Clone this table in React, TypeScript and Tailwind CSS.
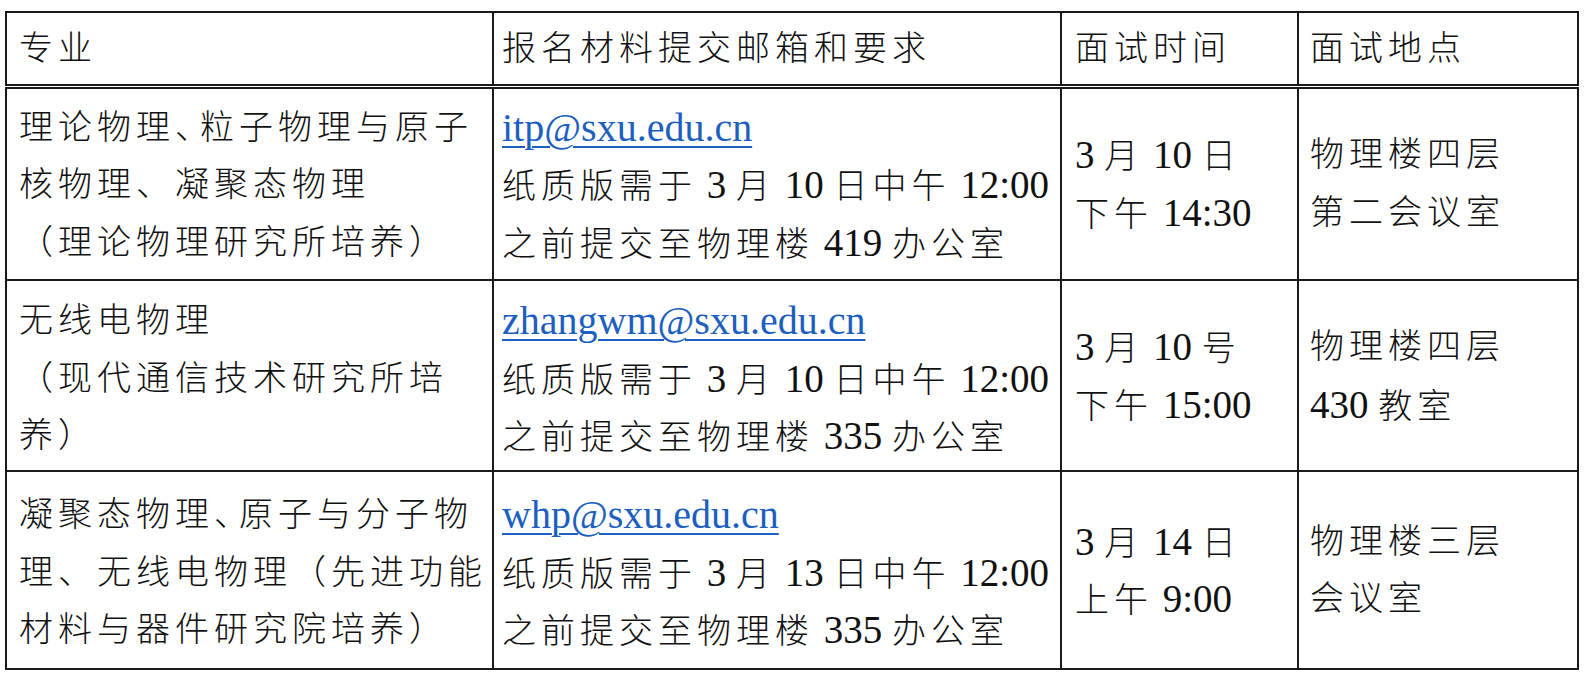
import React from "react";

const CJK = /[\u3000-\u303f\u4e00-\u9fff\uff00-\uffef]/;

function runs(s: string): { cjk: boolean; t: string }[] {
  const out: { cjk: boolean; t: string }[] = [];
  for (const ch of s) {
    const c = CJK.test(ch);
    const last = out[out.length - 1];
    if (last && last.cjk === c) last.t += ch;
    else out.push({ cjk: c, t: ch });
  }
  return out;
}

function Line({ text, link, tight }: { text: string; link?: boolean; tight?: boolean }) {
  if (link) {
    return (
      <div className="h-[57.5px] leading-[57.5px] whitespace-nowrap font-['Liberation_Serif','Noto_Sans_CJK_SC',serif]">
        <span className="text-[40px] text-[#1d5fbf] underline decoration-[2px] underline-offset-[5px]">
          {text}
        </span>
      </div>
    );
  }
  return (
    <div className="h-[57.5px] leading-[57.5px] whitespace-nowrap font-['Liberation_Serif','Noto_Sans_CJK_SC',serif]">
      {runs(text).map((r, i) =>
        r.cjk ? (
          <span key={i} className="text-[34px] tracking-[5px] font-light">
            {tight
              ? Array.from(r.t).map((ch, k) =>
                  ch === "、" ? (
                    <span key={k} className="tracking-[-9px]">
                      {ch}
                    </span>
                  ) : (
                    <React.Fragment key={k}>{ch}</React.Fragment>
                  )
                )
              : r.t}
          </span>
        ) : (
          <span key={i} className="text-[39px]">
            {r.t}
          </span>
        )
      )}
    </div>
  );
}

type Row = {
  pt: string;
  h: string;
  c1: string[];
  tight: boolean[];
  email: string;
  c2: string[];
  c3: string[];
  c4: string[];
};

const rows: Row[] = [
  {
    pt: "pt-[10px]",
    h: "h-[194px]",
    c1: ["理论物理、粒子物理与原子", "核物理、凝聚态物理", "（理论物理研究所培养）"],
    tight: [true, false, false],
    email: "itp@sxu.edu.cn",
    c2: ["纸质版需于 3 月 10 日中午 12:00", "之前提交至物理楼 419 办公室"],
    c3: ["3 月 10 日", "下午 14:30"],
    c4: ["物理楼四层", "第二会议室"],
  },
  {
    pt: "pt-[11px]",
    h: "h-[191px]",
    c1: ["无线电物理", "（现代通信技术研究所培", "养）"],
    tight: [false, false, false],
    email: "zhangwm@sxu.edu.cn",
    c2: ["纸质版需于 3 月 10 日中午 12:00", "之前提交至物理楼 335 办公室"],
    c3: ["3 月 10 号", "下午 15:00"],
    c4: ["物理楼四层", "430 教室"],
  },
  {
    pt: "pt-[14px]",
    h: "h-[198px]",
    c1: ["凝聚态物理、原子与分子物", "理、无线电物理（先进功能", "材料与器件研究院培养）"],
    tight: [true, false, false],
    email: "whp@sxu.edu.cn",
    c2: ["纸质版需于 3 月 13 日中午 12:00", "之前提交至物理楼 335 办公室"],
    c3: ["3 月 14 日", "上午 9:00"],
    c4: ["物理楼三层", "会议室"],
  },
];

export default function App() {
  return (
    <div className="w-[1584px] h-[674px] bg-white pl-[5px] pt-[11px] text-[#111] overflow-hidden">
      <table className="table-fixed border-collapse w-[1572px] border-2 border-[#1a1a1a]">
        <colgroup>
          <col className="w-[487px]" />
          <col className="w-[568px]" />
          <col className="w-[237px]" />
          <col className="w-[280px]" />
        </colgroup>
        <thead>
          <tr className="h-[74px]">
            <th className="border-2 border-b-[5px] border-double border-[#1a1a1a] pl-[12px] text-left font-normal align-middle">
              <Line text="专业" />
            </th>
            <th className="border-2 border-b-[5px] border-double border-[#1a1a1a] pl-[8px] text-left font-normal align-middle">
              <Line text="报名材料提交邮箱和要求" />
            </th>
            <th className="border-2 border-b-[5px] border-double border-[#1a1a1a] pl-[13px] text-left font-normal align-middle">
              <Line text="面试时间" />
            </th>
            <th className="border-2 border-b-[5px] border-double border-[#1a1a1a] pl-[11px] text-left font-normal align-middle">
              <Line text="面试地点" />
            </th>
          </tr>
        </thead>
        <tbody>
          {rows.map((r, i) => (
            <tr key={i} className={r.h}>
              <td className={`border-2 border-[#1a1a1a] pl-[12px] align-top ${r.pt}`}>
                {r.c1.map((t, j) => (
                  <Line key={j} text={t} tight={r.tight[j]} />
                ))}
              </td>
              <td className={`border-2 border-[#1a1a1a] pl-[8px] align-top ${r.pt}`}>
                <Line text={r.email} link />
                {r.c2.map((t, j) => (
                  <Line key={j} text={t} />
                ))}
              </td>
              <td className="border-2 border-[#1a1a1a] pl-[13px] align-middle">
                {r.c3.map((t, j) => (
                  <Line key={j} text={t} />
                ))}
              </td>
              <td className="border-2 border-[#1a1a1a] pl-[11px] align-middle">
                {r.c4.map((t, j) => (
                  <Line key={j} text={t} />
                ))}
              </td>
            </tr>
          ))}
        </tbody>
      </table>
    </div>
  );
}
